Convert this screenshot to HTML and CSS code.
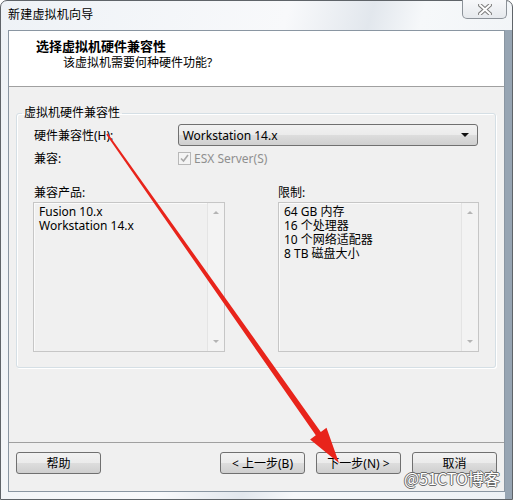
FILE: index.html
```html
<html lang="zh-CN">
<head>
    <meta charset="UTF-8">
    <meta name="viewport" content="width=device-width, initial-scale=1.0">
    <title>新建虚拟机向导</title>
    <link rel="stylesheet" href="styles.css">
</head>
<body>
<div class="window">
  <div class="titlebar">
    <span class="title">新建虚拟机向导</span>
    <div class="close">
      <svg width="14" height="11" viewBox="0 0 14 11">
        <path d="M2 1 L12 10 M12 1 L2 10" stroke="#7d7d7d" stroke-width="4" stroke-linecap="square"/>
        <path d="M2 1 L12 10 M12 1 L2 10" stroke="#ffffff" stroke-width="2" stroke-linecap="square"/>
      </svg>
    </div>
  </div>

  <div class="client">
    <div class="header">
      <div class="head-title">选择虚拟机硬件兼容性</div>
      <div class="head-sub">该虚拟机需要何种硬件功能?</div>
    </div>

    <div class="body">
      <fieldset class="group">
        <legend>虚拟机硬件兼容性</legend>
        <div class="group-inner">
          <div class="row">
            <span class="label">硬件兼容性(H):</span>
            <div class="combo">
              <span>Workstation 14.x</span>
              <span class="combo-arrow"></span>
            </div>
          </div>
          <div class="row row-check">
            <span class="label">兼容:</span>
            <span class="checkbox">
              <svg width="11" height="11" viewBox="0 0 11 11">
                <path d="M2 5.5 L4.5 8 L9 2" fill="none" stroke="#a8a8a8" stroke-width="1.6"/>
              </svg>
            </span>
            <span class="check-text">ESX Server(S)</span>
          </div>

          <div class="lists">
            <div class="col">
              <div class="col-label">兼容产品:</div>
              <div class="listbox">
                <div class="items">
                  <div>Fusion 10.x</div>
                  <div>Workstation 14.x</div>
                </div>
                <div class="scroll">
                  <span class="up"></span>
                  <span class="down"></span>
                </div>
              </div>
            </div>
            <div class="col col-right">
              <div class="col-label">限制:</div>
              <div class="listbox">
                <div class="items">
                  <div>64 GB 内存</div>
                  <div>16 个处理器</div>
                  <div>10 个网络适配器</div>
                  <div>8 TB 磁盘大小</div>
                </div>
                <div class="scroll">
                  <span class="up"></span>
                  <span class="down"></span>
                </div>
              </div>
            </div>
          </div>
        </div>
      </fieldset>
    </div>

    <div class="footer">
      <button class="btn">帮助</button>
      <div class="footer-right">
        <button class="btn">&lt; 上一步(B)</button>
        <button class="btn">下一步(N) &gt;</button>
        <button class="btn">取消</button>
      </div>
    </div>
  </div>
</div>

<!-- red annotation arrow drawn over the dialog -->
<svg class="arrow" width="513" height="500" viewBox="0 0 513 500">
  <polygon points="107.8,133.4 320.8,431.9 326.5,427.8 339,463 310.1,439.4 315.8,435.3 106.2,134.6" fill="#e8241b"/>
</svg>
<div class="watermark">@51CTO博客</div>
</body>
</html>
```

FILE: styles.css
```css
body {
    margin: 0;
    width: 513px;
    height: 500px;
    overflow: hidden;
    position: relative;
    font-family: "Noto Sans", "Noto Sans CJK SC", sans-serif;
    font-size: 12px;
    color: #000;
    background: #ffffff;
}

.window {
    box-sizing: border-box;
    width: 513px;
    height: 500px;
    border: 1px solid #5f6469;
    border-radius: 7px 7px 0 0;
    padding: 0 7px 7px 7px;
    display: flex;
    flex-direction: column;
    background:
        linear-gradient(to right, transparent 504px, #97a5b3 504px) 0 29px / 100% 100% no-repeat,
        linear-gradient(105deg, #eef2f6 0%, #f8f9fb 45%, #e2e7ed 58%, #f6f8fa 66%, #edf1f5 100%);
}

.titlebar {
    height: 29px;
    display: flex;
    align-items: flex-start;
}

.title {
    line-height: 16px;
    margin-top: 6px;
    letter-spacing: 0.2px;
}

/* close box of the title bar */
.close {
    margin-left: auto;
    margin-top: -1px;
    margin-right: -2px;
    width: 45px;
    height: 19px;
    box-sizing: border-box;
    border: 1px solid #8c9299;
    border-top: none;
    border-radius: 0 0 5px 5px;
    background: linear-gradient(#f7f8fa, #e6e9ed);
    display: flex;
    align-items: center;
    justify-content: center;
}

.client {
    flex: 1;
    display: flex;
    flex-direction: column;
    border: 1px solid #8a96a2;
    background-color: #f0f0f0;
}

.header {
    height: 55px;
    background: #ffffff;
    border-bottom: 1px solid #a0a0a0;
}

.head-title {
    font-family: "Noto Sans CJK SC", sans-serif;
    font-weight: bold;
    font-size: 13px;
    line-height: 16px;
    padding: 7px 0 0 27px;
}

.head-sub {
    line-height: 16px;
    padding: 1px 0 0 54px;
}

.body {
    flex: 1;
}

.group {
    margin: 18px 8px 0 7px;
    padding: 0;
    min-width: 0;
    border: 1px solid #d5dfe5;
    border-radius: 3px;
    box-shadow: inset 1px 1px #fff, 1px 1px #fff;
}

.group legend {
    margin-left: 5px;
    padding: 0 2px;
    line-height: 16px;
}

.group-inner {
    padding: 3px 17px 15px 17px;
}

.row {
    display: flex;
    align-items: center;
    height: 22px;
}

.label {
    width: 144px;
}

.combo {
    box-sizing: border-box;
    width: 301px;
    height: 22px;
    border: 1px solid #707070;
    border-radius: 3px;
    background: linear-gradient(#f2f2f2 0%, #ebebeb 50%, #dddddd 51%, #cfcfcf 100%);
    display: flex;
    align-items: center;
    padding: 0 8px 0 4px;
}

.combo-arrow {
    margin-left: auto;
    width: 0;
    height: 0;
    border-left: 4px solid transparent;
    border-right: 4px solid transparent;
    border-top: 4px solid #111;
}

.row-check {
    margin-top: 3px;
    height: 18px;
}

.checkbox {
    box-sizing: border-box;
    width: 13px;
    height: 13px;
    border: 1px solid #b8b8b8;
    background: #f4f4f4;
    display: flex;
    align-items: center;
    justify-content: center;
}

.check-text {
    margin-left: 3px;
    color: #8f8f8f;
}

.lists {
    display: grid;
    grid-template-columns: 192px 202px;
    column-gap: 52px;
    margin-top: 18px;
    margin-left: -1px;
}

.col-label {
    line-height: 16px;
    padding-left: 1px;
    margin-bottom: 1px;
}

.col-right .listbox {
    margin-left: 1px;
}

.listbox {
    box-sizing: border-box;
    height: 150px;
    border: 1px solid #c6c6c6;
    box-shadow: inset 1px 1px #fafafa;
    display: flex;
}

.items {
    flex: 1;
    padding: 2px 5px;
    line-height: 14px;
}

/* disabled scrollbar of a list box */
.scroll {
    width: 16px;
    border-left: 1px solid #e4e4e4;
    background: #f3f3f3;
    display: flex;
    flex-direction: column;
    justify-content: space-between;
    align-items: center;
    padding: 8px 0;
}

.up, .down {
    width: 0;
    height: 0;
    border-left: 3px solid transparent;
    border-right: 3px solid transparent;
}

.up {
    border-bottom: 3px solid #b4b4b4;
}

.down {
    border-top: 3px solid #b4b4b4;
}

.footer {
    height: 39px;
    border-top: 1px solid #a0a0a0;
    display: flex;
    align-items: flex-start;
    padding: 9px 7px 0 7px;
}

.footer-right {
    margin-left: auto;
    display: flex;
    gap: 11px;
}

.btn {
    width: 85px;
    height: 22px;
    border: 1px solid #707070;
    border-radius: 3px;
    background: linear-gradient(#f2f2f2 0%, #ebebeb 50%, #dddddd 51%, #cfcfcf 100%);
    font-family: "Noto Sans", "Noto Sans CJK SC", sans-serif;
    font-size: 12px;
    color: #000;
    padding: 0;
}

.arrow {
    position: absolute;
    left: 0;
    top: 0;
    pointer-events: none;
}

.watermark {
    position: absolute;
    left: 404px;
    top: 468px;
    font-family: "Noto Sans CJK SC", sans-serif;
    font-size: 16px;
    line-height: 20px;
    color: #ffffff;
    text-shadow: 1px 0 #6a6a6a, -1px 0 #6a6a6a, 0 1px #6a6a6a, 0 -1px #6a6a6a;
    pointer-events: none;
}
```
